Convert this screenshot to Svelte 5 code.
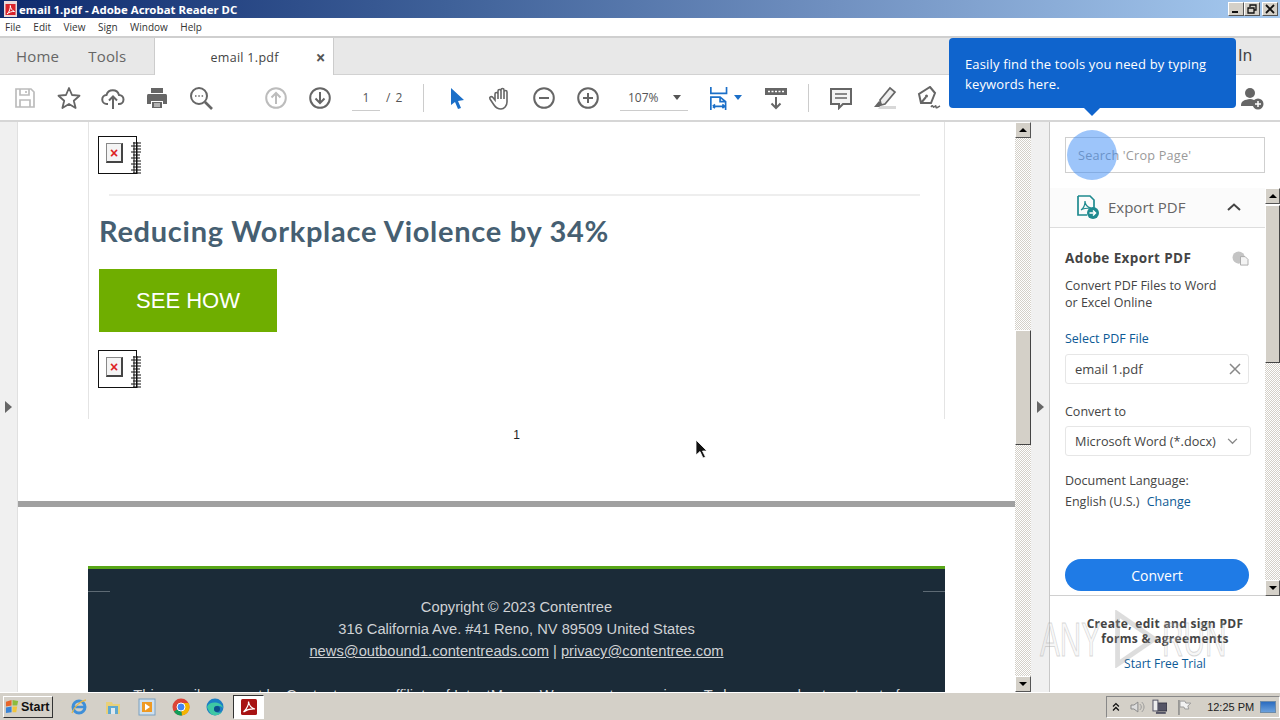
<script>
  const menus = ['File', 'Edit', 'View', 'Sign', 'Window', 'Help'];
</script>

<div class="app">
  <header class="titlebar">
    <svg class="tlogo" viewBox="0 0 14 16" width="14" height="16"><rect x="0" width="13" height="16" fill="#eadada"/><rect x="1.500" y="3" width="10" height="11" fill="#d8232a"/><path d="M3 13c2.500-2 3.500-6 3.300-8.500C6.500 7.500 8 9.500 10.500 10.500 8 10.300 5 11 3 13z" fill="none" stroke="#fff"/></svg>
    <span class="ttext">email 1.pdf - Adobe Acrobat Reader DC</span>
    <div class="winbtns">
      <button class="wb"><span class="min"></span></button>
      <button class="wb"><svg viewBox="0 0 12 11" width="12" height="11"><path d="M4 3V1h6v5H8M2 4h6v5H2z" fill="none" stroke="#111" stroke-width="1.300"/></svg></button>
      <button class="wb gap"><svg viewBox="0 0 12 11" width="12" height="11"><path d="M2 1l8 8M10 1L2 9" stroke="#111" stroke-width="1.800"/></svg></button>
    </div>
  </header>

  <nav class="menubar">
    {#each menus as m}<span>{m}</span>{/each}
  </nav>

  <div class="tabs">
    <span class="nav home">Home</span>
    <span class="nav tools">Tools</span>
    <div class="tab"><span class="tname">email 1.pdf</span><span class="tclose">×</span></div>
    <span class="signin">In</span>
  </div>

  <div class="toolbar">
    <button class="ib off"><svg viewBox="0 0 24 24"><path d="M3 3h15l3 3v15H3zM7 3v6h9V3M13 5v2M7 21v-7h10v7" fill="none" stroke="currentColor" stroke-width="1.700"/></svg></button>
    <button class="ib"><svg viewBox="0 0 24 24"><path d="M12 2l3 7 7.500.7-5.700 5 1.800 7.300L12 18l-6.600 4 1.800-7.300-5.700-5L9 9z" fill="none" stroke="currentColor" stroke-width="1.800" stroke-linejoin="round"/></svg></button>
    <button class="ib"><svg viewBox="0 0 24 24"><path d="M7 18H6a4.500 4.500 0 0 1-.5-9 6.500 6.500 0 0 1 12.500 0 4.500 4.500 0 0 1 0 9h-1M12 23V11M8 14.500l4-4 4 4" fill="none" stroke="currentColor" stroke-width="2"/></svg></button>
    <button class="ib"><svg viewBox="0 0 24 24"><path d="M6 2h12v5H6zM3 8h18a2 2 0 0 1 1 2v8h-4v-3H6v3H2v-8a2 2 0 0 1 1-2zM7 16h10v6H7z" fill="currentColor"/><path d="M9 18h6M9 20h6" stroke="#fff"/></svg></button>
    <button class="ib"><svg viewBox="0 0 24 24"><circle cx="10" cy="10" r="8" fill="none" stroke="currentColor" stroke-width="2"/><path d="M16 16l7 7" stroke="currentColor" stroke-width="2.600"/><path d="M6 10h1.500M9.300 10h1.500M12.600 10h1.500" stroke="currentColor" stroke-width="1.600"/></svg></button>
    <div class="s31"></div>
    <button class="ib off"><svg viewBox="0 0 24 24"><circle cx="12" cy="12" r="9.800" fill="none" stroke="currentColor" stroke-width="2"/><path d="M12 18V7M7.500 11.500L12 7l4.500 4.500" fill="none" stroke="currentColor" stroke-width="2"/></svg></button>
    <button class="ib"><svg viewBox="0 0 24 24"><circle cx="12" cy="12" r="9.800" fill="none" stroke="currentColor" stroke-width="2"/><path d="M12 6v11M7.500 12.500L12 17l4.500-4.500" fill="none" stroke="currentColor" stroke-width="2"/></svg></button>
    <div class="pager"><span class="pnum">1</span><span class="ptot">/ 2</span></div>
    <div class="sep"></div>
    <button class="ib blue"><svg viewBox="0 0 24 24"><path d="M7 2l13 12-6 1 3 7-3 1-3-7-4 3z" fill="#1b6fc8"/></svg></button>
    <button class="ib"><svg viewBox="0 0 24 24"><path d="M7 14V8a1.500 1.500 0 0 1 3 0V5a1.500 1.500 0 0 1 3 0v-1a1.500 1.500 0 0 1 3 0v2a1.500 1.500 0 0 1 3 0v10c0 4-3 7-6 7s-5-1-7-4l-4-6c-1-2 1-3 2.500-2z M10 8v5M13 4v9M16 5v8" fill="none" stroke="currentColor" stroke-width="1.600"/></svg></button>
    <button class="ib"><svg viewBox="0 0 24 24"><circle cx="12" cy="12" r="9.800" fill="none" stroke="currentColor" stroke-width="2"/><path d="M7 12h10" stroke="currentColor" stroke-width="2"/></svg></button>
    <button class="ib"><svg viewBox="0 0 24 24"><circle cx="12" cy="12" r="9.800" fill="none" stroke="currentColor" stroke-width="2"/><path d="M7 12h10M12 7v10" stroke="currentColor" stroke-width="2"/></svg></button>
    <div class="zoombox"><span>107%</span><i class="caret"></i></div>
    <button class="ib fit"><svg viewBox="0 0 26 26"><path d="M2 1v7h17V1M2 26v-14h10l6 5v9M12 12v5h6M4 22h13M4 22l2.500-2M4 22l2.500 2M17 22l-2.500-2M17 22l-2.500 2" fill="none" stroke="#1b6fc8" stroke-width="1.800"/></svg><i class="caret bl"></i></button>
    <button class="ib scr"><svg viewBox="0 0 24 24"><path d="M1 2h22v7H1z" fill="currentColor"/><path d="M4 5.500h16" stroke="#fff" stroke-width="1.500" stroke-dasharray="2 1.500"/><path d="M12 11v11M7.500 17.500L12 22l4.500-4.500" fill="none" stroke="currentColor" stroke-width="2"/></svg></button>
    <div class="sep two"></div>
    <button class="ib"><svg viewBox="0 0 24 24"><path d="M2 3h20v15h-8l-4 4v-4H2z" fill="#f4f4f4" stroke="currentColor" stroke-width="2"/><path d="M6 8h12M6 12h12" stroke="currentColor" stroke-width="1.300"/></svg></button>
    <button class="ib"><svg viewBox="0 0 24 24"><path d="M7 14L17 2l5 4-10 12-4 1z" fill="#eee" stroke="currentColor" stroke-width="1.700"/><path d="M6 15l3 3-2 3H1z" fill="currentColor"/><path d="M7 20h16v3H5z" fill="#d8d8d8"/></svg></button>
    <button class="ib"><svg viewBox="0 0 24 24"><path d="M13 1l5 6-4 10H4L2 8zM4 17l5-6" fill="none" stroke="currentColor" stroke-width="2"/><circle cx="9.500" cy="10" r="1.500" fill="currentColor"/><path d="M14 21c2-3 2 1 3 0s2-2 2 0 2 0 4-1" fill="none" stroke="currentColor" stroke-width="1.500"/></svg></button>
    <div class="spring"></div>
    <button class="ib"><svg viewBox="0 0 24 24"><circle cx="10" cy="7" r="5" fill="currentColor"/><path d="M1 20c0-6 4-6 9-7 3 0 4 1 5 2a6 6 0 0 0-2 5z" fill="currentColor"/><circle cx="18" cy="18" r="5.500" fill="currentColor"/><path d="M15 18h6M18 15v6" stroke="#fff" stroke-width="1.500"/></svg></button>
  </div>

  <main class="main">
    <aside class="strip"><i class="tri"></i></aside>

    <section class="doc">
      <div class="sheet">
        <div class="broken">
          <span class="bicon"><b>×</b></span>
          <svg class="scribble" viewBox="0 0 12 32" width="12" height="32"><path d="M3 1h8M1 4h10M3 7h8M1 10h10M3 13h7M1 16h9M3 19h8M1 22h10M3 25h8M1 28h10M3 31h8M4 0v32M7 0v32" stroke="#111" stroke-width="1"/></svg>
        </div>
        <hr class="rule" />
        <h1>Reducing Workplace Violence by 34%</h1>
        <a class="cta" href="#see">SEE HOW</a>
        <div class="broken second">
          <span class="bicon"><b>×</b></span>
          <svg class="scribble" viewBox="0 0 12 32" width="12" height="32"><path d="M3 1h8M1 4h10M3 7h8M1 10h10M3 13h7M1 16h9M3 19h8M1 22h10M3 25h8M1 28h10M3 31h8M4 0v32M7 0v32" stroke="#111" stroke-width="1"/></svg>
        </div>
      </div>
      <div class="pageno">1</div>
      <div class="pagegap"></div>
      <div class="footer">
        <div class="ticks"><i></i><i></i></div>
        <p>Copyright © 2023 Contentree</p>
        <p>316 California Ave. #41 Reno, NV 89509 United States</p>
        <p><u>news@outbound1.contentreads.com</u> | <u>privacy@contentree.com</u></p>
        <p class="last">This email was sent by Contentree, an affiliate of IntentMacro. We respect your privacy. To be removed or to opt out of</p>
      </div>
    </section>

    <div class="vscroll">
      <span class="sbtn up"></span>
      <div class="track"><div class="t1 first"></div><div class="thumb th1"></div><div class="t1"></div></div>
      <span class="sbtn down"></span>
    </div>

    <aside class="strip two"><i class="tri"></i></aside>

    <aside class="panel">
      <div class="searchwrap"><div class="search">Search 'Crop Page'</div></div>
      <div class="panelmid">
        <div class="pcontent">
          <div class="phead">
            <svg viewBox="0 0 24 24" width="24" height="24"><path d="M2 1h12l4 4v8M2 1v19h9" fill="none" stroke="#1f8a8f" stroke-width="1.700"/><path d="M5 15c3-2 4-6 4-9 0 4 2 6 6 7-4 0-7 0-10 2z" fill="none" stroke="#1f8a8f" stroke-width="1.200"/><circle cx="17" cy="18" r="6" fill="#1f8a8f"/><path d="M13.500 18h6M17 15.500l2.500 2.500-2.500 2.500" fill="none" stroke="#fff" stroke-width="1.500"/></svg>
            <span>Export PDF</span>
            <svg class="chev" viewBox="0 0 14 8" width="14" height="8"><path d="M1 7l6-5.500L13 7" fill="none" stroke="#444" stroke-width="2"/></svg>
          </div>
          <div class="pbody">
            <div class="ttlrow"><strong>Adobe Export PDF</strong>
              <svg viewBox="0 0 18 16" width="17" height="15"><circle cx="7" cy="7" r="6.500" fill="#c4c4c4"/><path d="M9 6h5l3 3v6H9z" fill="#f4f4f4" stroke="#aaa"/></svg>
            </div>
            <p class="desc">Convert PDF Files to Word<br />or Excel Online</p>
            <a class="sel" href="#sel">Select PDF File</a>
            <div class="field"><span>email 1.pdf</span><svg viewBox="0 0 12 12" width="12" height="12"><path d="M1 1l10 10M11 1L1 11" stroke="#888" stroke-width="1.500"/></svg></div>
            <div class="lbl conv">Convert to</div>
            <div class="field drop"><span>Microsoft Word (*.docx)</span><svg viewBox="0 0 12 8" width="11" height="7"><path d="M1 1l5 5 5-5" fill="none" stroke="#888" stroke-width="1.500"/></svg></div>
            <div class="lbl lang">Document Language:</div>
            <div class="lbl eng">English (U.S.) <a href="#c">Change</a></div>
            <button class="convert">Convert</button>
          </div>
        </div>
        <div class="vscroll small">
          <span class="sbtn up"></span>
          <div class="track"><div class="t2"></div><div class="thumb th2"></div><div class="t1"></div></div>
          <span class="sbtn down"></span>
        </div>
      </div>
      <div class="promo">
        <b>Create, edit and sign PDF<br />forms &amp; agreements</b>
        <a href="#t">Start Free Trial</a>
      </div>
    </aside>
  </main>

  <footer class="taskbar">
    <button class="start">
      <svg viewBox="0 0 16 16" width="15" height="15"><path d="M1 3l6-2v6l-6 1z" fill="#e8662a"/><path d="M8 1l6 1-1 5-5 0z" fill="#8cbb3c"/><path d="M1 9l6-1v6l-6 1z" fill="#3a84d6"/><path d="M8 8h5l-1 6-4 0z" fill="#f2c53a"/></svg>
      Start
    </button>
    <div class="quick">
      <span class="qi"><svg viewBox="0 0 18 18"><circle cx="9" cy="9" r="6" fill="none" stroke="#3f8fd8" stroke-width="3"/><path d="M3 9h12" stroke="#3f8fd8" stroke-width="2.500"/><path d="M2 15c2-6 8-12 14-13" fill="none" stroke="#e5b84a" stroke-width="1.300"/></svg></span>
      <span class="qi"><svg viewBox="0 0 18 18"><path d="M2 4h6l1 2h7v10H2z" fill="#e9d07a"/><path d="M4 8h10v8H4z" fill="#5fa8d0"/><path d="M7 10h4v6H7z" fill="#dfe9ee"/></svg></span>
      <span class="qi"><svg viewBox="0 0 18 18"><rect x="1" y="1" width="16" height="16" fill="#cfe0ee" stroke="#7aa0c0"/><rect x="4" y="4" width="10" height="10" fill="#ef9a23"/><path d="M7 5.500l5 3.500-5 3.500z" fill="#fff"/></svg></span>
      <span class="qi"><svg viewBox="0 0 18 18"><circle cx="9" cy="9" r="8.500" fill="#db4437"/><path d="M9 9L2 13.500A8.500 8.500 0 0 0 10 17.500z" fill="#0f9d58"/><path d="M9 5h7.500A8.500 8.500 0 0 1 10 17.500z" fill="#f4b400"/><circle cx="9" cy="9" r="4" fill="#4285f4" stroke="#fff"/></svg></span>
      <span class="qi"><svg viewBox="0 0 18 18"><circle cx="9" cy="9" r="8.500" fill="#1b7fc4"/><path d="M1 9c2-6 14-6 16 1-3-3-9-3-9 1 0 3 4 5 8 3-3 4-8 4-11 2-2-2-3-5-4-7z" fill="#3ec7a4"/><circle cx="11" cy="11" r="3" fill="#0d4f8a"/></svg></span>
      <span class="qi active"><svg viewBox="0 0 18 18"><rect x="1" y="1" width="16" height="16" rx="1.500" fill="#a81414"/><path d="M3.500 14C7 11 9 6 8.500 3.500 9 7 11 10 15 11c-4-.3-8 .5-11.500 3z" fill="none" stroke="#fff" stroke-width="1.200"/></svg></span>
    </div>
    <div class="tray">
      <svg class="chevs" viewBox="0 0 8 10" width="8" height="10"><path d="M1 4.500L4 1.500l3 3M1 8.500L4 5.500l3 3" fill="none" stroke="#111" stroke-width="1.300"/></svg>
      <svg viewBox="0 0 16 16" width="16" height="16"><path d="M1 6h3l4-3v10l-4-3H1z" fill="#ddd" stroke="#888"/><path d="M10 5c2 2 2 4 0 6M12 3c3 3 3 7 0 10" fill="none" stroke="#999"/></svg>
      <svg viewBox="0 0 16 16" width="16" height="16"><rect x="5" y="4" width="10" height="8" fill="#556" stroke="#334"/><rect x="1" y="1" width="5" height="11" fill="#eee" stroke="#556"/><path d="M4 14h10" stroke="#556" stroke-width="2"/></svg>
      <svg class="flag" viewBox="0 0 16 16" width="16" height="16"><path d="M3 1v15" stroke="#888" stroke-width="1.500"/><path d="M4 2h5l1 2h5l-3 3 1 3H9L8 8H4z" fill="#f2f2f2" stroke="#999"/></svg>
      <span class="clock">12:25 PM</span>
      <span class="desk"></span>
    </div>
  </footer>

  <div class="tip">Easily find the tools you need by typing keywords here.</div>
  <div class="pulse"></div>
  <svg class="cursor" viewBox="0 0 14 20" width="14" height="20"><path d="M1 1v15l4-3.500L8 19l2.500-1-3-6H12z" fill="#111" stroke="#fff" stroke-width=".8"/></svg>
  <div class="mark"><span class="mw">ANY</span><svg viewBox="0 0 50 60" width="50" height="58"><path d="M8 4l38 26L8 56z" fill="none" stroke="#999" stroke-width="5"/></svg><span class="mw">RUN</span></div>
</div>

<style>
  :global(body) { margin: 0; }
  * { box-sizing: border-box; }
  button { border: 0; padding: 0; background: none; font: inherit; color: inherit; }
  a { text-decoration: none; }
  .app { position: relative; width: 1280px; height: 720px; overflow: hidden; display: flex; flex-direction: column; font-family: "Open Sans", "Noto Sans", sans-serif; color: #444; background: #fff; }

  .titlebar { height: 18px; flex: none; display: flex; align-items: center; padding-left: 4px; gap: 1px; background: linear-gradient(90deg, #0e2a6e 0%, #3f6199 35%, #7090c0 65%, #a6caf0 100%); color: #fff; }
  .tlogo { flex: none; }
  .ttext { font: 700 11.400px "Noto Sans", sans-serif; white-space: nowrap; }
  .winbtns { margin-left: auto; display: flex; gap: 0; padding-right: 2px; }
  .wb { width: 16px; height: 14px; background: #d4d0c8; border: 1px solid; border-color: #fff #555 #555 #fff; display: flex; align-items: center; justify-content: center; }
  .wb.gap { margin-left: 2px; }
  .min { width: 6px; height: 2px; background: #111; margin-top: 6px; margin-right: 2px; }

  .menubar { height: 20px; flex: none; display: flex; align-items: center; gap: 12.500px; padding-left: 5px; font: 10px "Open Sans", sans-serif; color: #333; background: #fff; border-bottom: 2px solid #cfcfcf; }

  .tabs { height: 37px; flex: none; display: flex; align-items: center; background: #e8e8e8; border-bottom: 1px solid #d2d2d2; position: relative; font-size: 15px; color: #666; }
  .nav { letter-spacing: .2px; }
  .home { margin-left: 16px; }
  .tools { margin-left: 29px; }
  .tab { margin-left: 28px; width: 180px; height: 37px; background: #fff; border-left: 1px solid #ccc; border-right: 1px solid #ccc; display: flex; align-items: center; font-size: 12.500px; color: #444; padding: 1px 0 0 55px; margin-bottom: -1px; }
  .tname { letter-spacing: .3px; }
  .tclose { margin-left: 37px; font-size: 17px; font-weight: 700; color: #555; line-height: 1; }
  .signin { position: absolute; left: 1238px; top: 9px; font: 15.500px "DejaVu Sans", sans-serif; color: #444; }

  .toolbar { height: 47px; flex: none; display: flex; align-items: center; padding-left: 3px; background: #fff; border-bottom: 2px solid #d6d6d6; }
  .ib { width: 44px; height: 32px; flex: none; display: flex; align-items: center; justify-content: center; color: #666; }
  .ib svg { width: 24px; height: 24px; }
  .ib.off { color: #bcbcbc; }
  .s31 { width: 31px; flex: none; }
  .pager { display: flex; align-items: center; margin-left: 10px; width: 61px; font-size: 12px; color: #555; }
  .pnum { width: 28px; text-align: center; height: 26px; line-height: 26px; border-bottom: 1px solid #ccc; }
  .ptot { margin-left: 6px; letter-spacing: 1px; }
  .sep { width: 1px; height: 28px; background: #ccc; flex: none; margin: 0 10px; }
  .zoombox { width: 68px; height: 26px; margin-left: 10px; flex: none; border-bottom: 1px solid #ccc; display: flex; align-items: center; font-size: 12px; color: #555; padding-left: 8px; }
  .caret { display: block; width: 0; height: 0; border: 4px solid transparent; border-top: 5px solid #555; border-bottom: 0; margin-left: 14px; }
  .caret.bl { border-top-color: #1b6fc8; margin-left: 1px; }
  .ib.fit { margin-left: 9px; width: 52px; padding-left: 12px; justify-content: flex-start; }
  .ib.fit svg { width: 24px; height: 26px; flex: none; }
  .ib.scr { margin-left: 5px; }
  .spring { flex: 1; }
  .toolbar > .ib:last-child { margin-right: 6px; }

  .main { flex: 1; min-height: 0; display: flex; }
  .strip { width: 18px; flex: none; background: #f0f0f0; display: flex; align-items: center; justify-content: center; border-right: 1px solid #e0e0e0; }
  .strip.two { border-right: 1px solid #c8c8c8; width: 19px; }
  .tri { display: block; width: 0; height: 0; border: 6px solid transparent; border-left: 7px solid #666; border-right: 0; }

  .doc { width: 997px; flex: none; overflow: hidden; background: #fff; }
  .sheet { margin-left: 70px; width: 857px; height: 297px; border-left: 1px solid #e4e4e4; border-right: 1px solid #e4e4e4; padding: 14px 0 0 9px; }
  .broken { position: relative; width: 39px; height: 38px; border: 1px solid #111; }
  .second { margin-top: 18px; }
  .bicon { position: absolute; left: 7px; top: 6px; width: 17px; height: 20px; background: #f4f4f4; border: 1px solid #888; border-right: 2px solid #444; border-bottom: 2px solid #444; display: flex; align-items: center; justify-content: center; }
  .bicon b { color: #d22; font: 700 14px "Liberation Sans", sans-serif; line-height: 1; }
  .scribble { position: absolute; left: 31px; top: 5px; }
  .rule { margin: 20px 24px 0 11px; border: 0; height: 2px; background: #eee; }
  h1 { margin: 17px 0 20px 1px; font: 700 29px/36px Lato, sans-serif; letter-spacing: .72px; color: #465f72; white-space: nowrap; }
  .cta { display: flex; margin-left: 1px; width: 178px; height: 63px; align-items: center; justify-content: center; background: #6fae00; color: #fff; font: 22px "Liberation Sans", sans-serif; }
  .pageno { height: 75px; margin-top: 8px; width: 997px; text-align: center; font: 12px/16px "Liberation Sans", sans-serif; color: #222; }
  .pagegap { height: 6px; background: #a0a0a0; margin-top: -1px; }
  .footer { margin: 59px 0 0 70px; width: 857px; height: 200px; background: #1b2b38; border-top: 3px solid #58a618; color: #cfd2d5; font: 14.700px/22px "Liberation Sans", sans-serif; text-align: center; overflow: hidden; }
  .ticks { display: flex; justify-content: space-between; padding-top: 22px; height: 27px; }
  .ticks i { display: block; width: 22px; height: 1px; background: #5d6a74; }
  .footer p { margin: 0; white-space: nowrap; }
  .footer .last { margin-top: 22px; }

  .vscroll { width: 16px; flex: none; display: flex; flex-direction: column; }
  .vscroll.small { width: 15px; }
  .sbtn { height: 16px; flex: none; background: #d4d0c8; border: 1px solid; border-color: #fff #555 #555 #fff; display: flex; align-items: center; justify-content: center; }
  .sbtn::after { content: ""; border: 4px solid transparent; }
  .sbtn.up::after { border-bottom: 4px solid #000; border-top: 0; }
  .sbtn.down::after { border-top: 4px solid #000; border-bottom: 0; }
  .track { flex: 1; display: flex; flex-direction: column; min-height: 0; }
  .t1 { flex: 1; background: repeating-conic-gradient(#d4d0c8 0 25%, #fff 0 50%) 0 0 / 2px 2px; }
  .t1.first { flex: none; height: 192px; }
  .t2 { height: 1px; }
  .thumb { flex: none; background: #d4d0c8; border: 1px solid; border-color: #fff #444 #444 #fff; }
  .th1 { height: 115px; }
  .th2 { height: 158px; }

  .panel { flex: 1; display: flex; flex-direction: column; background: #fff; min-width: 0; }
  .searchwrap { height: 66px; flex: none; padding: 15px 15px 0; }
  .search { height: 36px; border: 1px solid #cfcfcf; padding-left: 12px; line-height: 34px; font-size: 12.700px; color: #9a9a9a; letter-spacing: .2px; }
  .panelmid { height: 408px; flex: none; display: flex; }
  .pcontent { flex: 1; min-width: 0; border-bottom: 1px solid #d0d0d0; }
  .phead { height: 40px; padding-bottom: 2px; background: #fbfbfb; border-bottom: 1px solid #ddd; display: flex; align-items: center; padding-left: 26px; font-size: 15px; color: #666; }
  .phead span { margin-left: 8px; }
  .chev { margin-left: auto; margin-right: 24px; }
  .pbody { padding: 20px 16px 0 15px; font-size: 12.500px; color: #444; }
  .ttlrow { display: flex; align-items: center; justify-content: space-between; height: 20px; font-size: 13.500px; letter-spacing: .4px; }
  .desc { margin: 9px 0 0; line-height: 17px; white-space: nowrap; }
  .sel { display: block; margin-top: 19px; color: #0d5a96; line-height: 17px; }
  .field { margin-top: 7px; height: 30px; width: 184px; border: 1px solid #e6e6e6; border-radius: 3px; display: flex; align-items: center; justify-content: space-between; padding: 0 7px 0 9px; font-size: 13px; }
  .lbl { margin-top: 13px; line-height: 17px; white-space: nowrap; }
  .lbl.conv { margin-top: 19px; }
  .field.drop { width: 186px; height: 30px; margin-top: 6px; padding-right: 12px; font-size: 12.700px; }
  .lang { margin-top: 16px; }
  .eng { margin-top: 4px; }
  .eng a { color: #0d5a96; margin-left: 4px; }
  .convert { display: block; margin-top: 49px; width: 184px; height: 32px; border-radius: 16px; background: #1f7be6; color: #fff; font-size: 14px; }

  .promo { flex: 1; text-align: center; padding: 20px 12px 0 0; margin-left: 12px; font-size: 12px; line-height: 15px; color: #444; position: relative; z-index: 2; }
  .promo b { display: block; letter-spacing: .3px; }
  .promo a { display: block; margin-top: 10px; color: #0d5a96; }

  .taskbar { height: 28px; flex: none; display: flex; align-items: center; background: #d4d0c8; border-top: 1px solid #fff; font-family: "Liberation Sans", sans-serif; position: relative; z-index: 3; }
  .start { margin-left: 3px; width: 50px; height: 22px; background: #d4d0c8; border: 1px solid; border-color: #fff #333 #333 #fff; display: flex; align-items: center; gap: 1px; padding-left: 1px; font: 700 12.500px "Liberation Sans", sans-serif; color: #111; }
  .quick { display: flex; margin-left: 9px; align-items: center; }
  .qi { width: 34px; height: 24px; display: flex; align-items: center; justify-content: center; }
  .qi svg { width: 18px; height: 18px; }
  .qi.active { width: 31px; margin-left: 1px; background: #fff; border: 1px solid; border-color: #333 #fff #fff #333; }
  .tray { margin-left: auto; width: 174px; height: 22px; border: 1px solid; border-color: #888 #fff #fff #888; display: flex; align-items: center; padding-left: 5px; gap: 6px; font-size: 11px; color: #222; }
  .chevs { margin-right: 4px; }
  .flag { margin-left: 3px; }
  .clock { margin-left: 9px; white-space: nowrap; }
  .desk { margin-left: auto; margin-right: 3px; width: 16px; height: 12px; background: linear-gradient(#2a6cc0, #6aa0dc); border: 1px solid #6d8ba8; }

  .tip { position: absolute; left: 949px; top: 38px; width: 287px; height: 70px; padding: 16px; border-radius: 4px; background: #0f64cd; color: #fff; font-size: 13px; line-height: 20px; letter-spacing: .15px; z-index: 5; }
  .tip::after { content: ""; position: absolute; left: 135px; bottom: -8px; border: 8px solid transparent; border-top-color: #0f64cd; border-bottom: 0; }
  .pulse { position: absolute; left: 1067px; top: 130px; width: 50px; height: 50px; border-radius: 50%; background: rgba(60, 140, 245, .5); z-index: 5; }
  .cursor { position: absolute; left: 695px; top: 439px; z-index: 6; }
  .mark { position: absolute; left: 1040px; top: 610px; display: flex; align-items: center; font: 400 48px "Liberation Sans", sans-serif; color: rgba(225, 225, 225, .3); -webkit-text-stroke: 1px rgba(150, 150, 150, .45); opacity: .8; z-index: 4; pointer-events: none; }
  .mark svg { opacity: .4; margin: 0 3px 0 4px; flex: none; }
  .mw { display: block; width: 65px; white-space: nowrap; transform: scaleX(.62); transform-origin: left center; }
</style>
